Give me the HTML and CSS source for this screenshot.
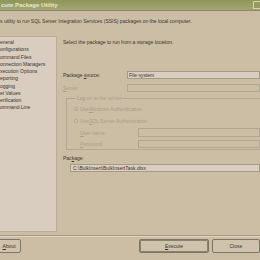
FILE: index.html
```html
<!DOCTYPE html>
<html>
<head>
<meta charset="utf-8">
<link rel="stylesheet" href="styles.css">
</head>
<body>
<div class="win">
  <div class="titlebar">
    <span class="title">cute Package Utility</span>
    <span class="close"></span>
  </div>
  <div class="desc">s utility to run SQL Server Integration Services (SSIS) packages on the local computer.</div>
  <div class="main">
    <ul class="nav">
      <li class="sel">eneral</li>
      <li>onfigurations</li>
      <li>ommand Files</li>
      <li>onnection Managers</li>
      <li>xecution Options</li>
      <li>eporting</li>
      <li>ogging</li>
      <li>et Values</li>
      <li>erification</li>
      <li>ommand Line</li>
    </ul>
    <div class="pane">
      <div class="intro">Select the package to run from a storage location.</div>
      <div class="row r-source">
        <span class="lbl">Package <u>s</u>ource:</span>
        <span class="box">File system</span>
      </div>
      <div class="row r-server dis">
        <span class="lbl"><u>S</u>erver:</span>
        <span class="box"></span>
      </div>
      <fieldset class="group dis">
        <legend>Log on to the server</legend>
        <div class="radio r1"><span class="dot on"></span>Use <u>W</u>indows Authentication</div>
        <div class="radio r2"><span class="dot"></span>Use <u>S</u>QL Server Authentication</div>
        <div class="row r-user">
          <span class="lbl2"><u>U</u>ser name:</span>
          <span class="box"></span>
        </div>
        <div class="row r-pass">
          <span class="lbl2"><u>P</u>assword:</span>
          <span class="box"></span>
        </div>
      </fieldset>
      <div class="pkglbl">Pac<u>k</u>age:</div>
      <div class="pkgbox">C:\BulkInsert\BulkInsertTask.dtsx</div>
    </div>
  </div>
  <div class="sep"></div>
  <div class="buttons">
    <span class="btn about"><u>A</u>bout</span>
    <span class="btn exec"><u>E</u>xecute</span>
    <span class="btn closeb">Close</span>
  </div>
</div>
</body>
</html>
```
FILE: styles.css
```css
html, body {
  margin: 0;
  padding: 0;
  width: 260px;
  height: 260px;
  overflow: hidden;
  background: #cbbea5;
}
.win {
  width: 260px;
  height: 260px;
  font-family: "Liberation Sans", Arial, sans-serif;
  font-size: 5px;
  color: #3b352c;
  background: #cbbea5;
  display: flex;
  flex-direction: column;
}
u { text-decoration: underline; }
.titlebar {
  height: 11px;
  background: linear-gradient(#8e9759, #a3a673);
  border-bottom: 1px solid #8a8a66;
  display: flex;
  align-items: center;
  justify-content: space-between;
  box-sizing: border-box;
}
.title {
  color: #e9e6c8;
  font-size: 6px;
  font-weight: bold;
  padding-left: 1px;
}
.close {
  width: 8px;
  height: 8px;
  margin-right: -1px;
  border: 1px solid #d7d3a8;
  box-sizing: border-box;
  background: #98995f;
}
.desc {
  margin-top: 7px;
  height: 6px;
  line-height: 6px;
  white-space: nowrap;
}
.main {
  margin-top: 12px;
  display: flex;
  height: 196px;
}
.nav {
  list-style: none;
  margin: 0;
  padding: 2px 0 0 0;
  width: 57px;
  box-sizing: border-box;
  background: #d8cdbf;
  border: 1px solid #b9ad97;
  border-left: none;
}
.nav li {
  height: 7.25px;
  line-height: 7px;
  white-space: nowrap;
}
.nav li.sel span, .nav li.sel { }
.pane {
  flex: 1;
  padding-left: 6px;
  position: relative;
}
.intro {
  margin-top: 3px;
  line-height: 6px;
}
.row {
  display: flex;
  align-items: center;
}
.lbl {
  width: 64px;
}
.box {
  flex: 1;
  height: 8px;
  background: #d9cebf;
  border: 1px solid #a59a86;
  box-sizing: border-box;
  line-height: 6px;
  padding-left: 1px;
}
.r-source { margin-top: 26px; }
.r-server { margin-top: 5px; }
.dis { color: #a89d8b; }
.r-server .box { background: #cbbea5; border-color: #b0a590; }
.group {
  margin: 4px 0 0 3px;
  padding: 0 0 0 7px;
  border: 1px solid #b3a893;
  border-right: none;
  height: 54px;
  box-sizing: border-box;
}
.group legend {
  padding: 0 1px;
  margin-left: 2px;
  line-height: 5px;
}
.radio {
  display: flex;
  align-items: center;
  height: 6px;
  line-height: 6px;
}
.r1 { margin-top: 5px; }
.r2 { margin-top: 6px; }
.dot {
  width: 4px;
  height: 4px;
  border-radius: 50%;
  border: 1px solid #b3a893;
  background: #d5cab9;
  margin-right: 2px;
  box-sizing: border-box;
  position: relative;
}
.dot.on::after {
  content: "";
  position: absolute;
  left: 1px; top: 1px;
  width: 1px; height: 1px;
  background: #a89d8b;
}
.lbl2 {
  width: 58px;
  padding-left: 6px;
}
.r-user { margin-top: 4px; }
.r-user .box { height: 9px; }
.r-pass { margin-top: 3px; }
.group .box { background: #cbbea5; border-color: #b0a590; }
.pkglbl {
  margin-top: 5px;
  line-height: 6px;
}
.pkgbox {
  margin: 3px 0 0 7px;
  height: 8px;
  line-height: 6px;
  background: #d9cebf;
  border: 1px solid #a59a86;
  box-sizing: border-box;
  padding-left: 2px;
  white-space: nowrap;
}
.sep {
  margin-top: 3px;
  height: 0;
  border-top: 1px solid #a69a84;
  border-bottom: 1px solid #ddd3c3;
}
.buttons {
  display: flex;
  margin-top: 2px;
  height: 14px;
}
.btn {
  height: 14px;
  box-sizing: border-box;
  border: 1px solid #7d7565;
  border-radius: 2px;
  background: #cfc3ad;
  display: flex;
  align-items: center;
  justify-content: center;
  white-space: nowrap;
}
.about { width: 25px; margin-left: -3px; }
.exec { width: 72px; margin-left: 118px; border-width: 1px; box-shadow: inset 0 0 0 1px #8c836f; }
.closeb { width: 50px; margin-left: 3px; }
```
